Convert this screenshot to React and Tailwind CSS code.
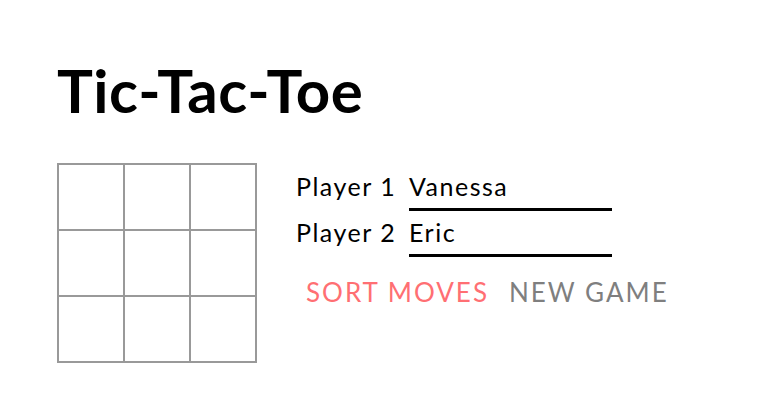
import React, { useState } from 'react';

const font = { fontFamily: 'Futura, Lato, "DejaVu Sans", sans-serif' };

const Board = () => (
  <div className="grid grid-cols-3 gap-[2px] p-[2px] bg-[#999999] w-[200px] h-[200px]">
    {Array.from({ length: 9 }).map((_, i) => (
      <button key={i} className="bg-white w-[64px] h-[64px]" />
    ))}
  </div>
);

const PlayerRow = ({ label, value }) => (
  <div className="flex items-end h-[46px] text-[25px] leading-none text-black">
    <span className="w-[113px] pb-[12px]">{label}</span>
    <div className="w-[203px] border-b-[3px] border-black pb-[9px]">{value}</div>
  </div>
);

export default function App() {
  const [p1] = useState('Vanessa');
  const [p2] = useState('Eric');
  return (
    <div className="w-[772px] h-[408px] bg-white pl-[57px] pt-[60px]" style={font}>
      <h1 className="text-[60px] font-bold leading-none text-black tracking-[0.5px]">Tic-Tac-Toe</h1>
      <div className="flex mt-[43px]">
        <Board />
        <div className="ml-[39px] mt-[2px] tracking-[1.5px]">
          <PlayerRow label="Player 1" value={p1} />
          <PlayerRow label="Player 2" value={p2} />
          <div className="flex gap-[20px] ml-[10px] mt-[22px] tracking-[2px]">
            <button className="text-[26px] leading-none text-[#ff6f73]">SORT MOVES</button>
            <button className="text-[26px] leading-none text-[#7f7f7f]">NEW GAME</button>
          </div>
        </div>
      </div>
    </div>
  );
}
